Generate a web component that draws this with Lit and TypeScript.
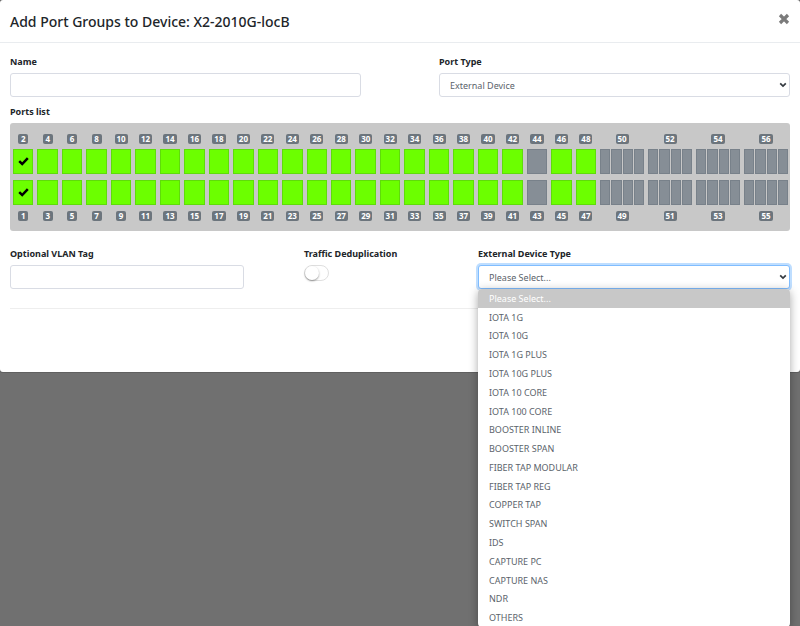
import { LitElement, html, css, svg } from "lit";
import { customElement, state } from "lit/decorators.js";
import { classMap } from "lit/directives/class-map.js";

const DEVICE_TYPES = [
  "Please Select...",
  "IOTA 1G",
  "IOTA 10G",
  "IOTA 1G PLUS",
  "IOTA 10G PLUS",
  "IOTA 10 CORE",
  "IOTA 100 CORE",
  "BOOSTER INLINE",
  "BOOSTER SPAN",
  "FIBER TAP MODULAR",
  "FIBER TAP REG",
  "COPPER TAP",
  "SWITCH SPAN",
  "IDS",
  "CAPTURE PC",
  "CAPTURE NAS",
  "NDR",
  "OTHERS",
];

const PORT_COUNT = 56;
const FIRST_QUAD_PORT = 49;
const DISABLED_PORTS = new Set([43, 44]);

const chevron = svg`<svg class="chevron" viewBox="0 0 8 6" aria-hidden="true">
  <path d="M1.2 1.3 4 4.1 6.8 1.3" fill="none" stroke="#343a40" stroke-width="1.7"/>
</svg>`;

@customElement("port-panel")
export class PortPanel extends LitElement {
  @state() private selected = new Set([1, 2]);

  static styles = css`
    :host {
      display: block;
      padding: 11px 0 10px 1px;
      background: #c8c8c8;
      border-radius: 3px;
    }
    .grid {
      display: grid;
      grid-template-columns: repeat(24, minmax(0, 51fr)) repeat(4, minmax(0, 100fr));
      grid-template-rows: 10px 26px 26px 10px;
      row-gap: 5px;
    }
    .cell {
      display: flex;
      gap: 1px;
      padding: 0 2px 1px;
    }
    .label {
      justify-self: center;
      box-sizing: border-box;
      height: 10px;
      padding: 0 2px;
      min-width: 10px;
      text-align: center;
      border-radius: 2px;
      background: #6c757d;
      color: #fff;
      font-size: 8px;
      line-height: 10px;
      font-weight: 700;
    }
    .port {
      flex: 1;
      min-width: 0;
      display: flex;
      align-items: center;
      justify-content: center;
      padding: 0;
      border: 1px solid #5fdc0a;
      border-radius: 0;
      background: #6cff00;
    }
    .port.off {
      border-color: #78818a;
      background: #868e96;
    }
    .check {
      width: 11px;
      height: 9px;
    }
  `;

  private toggle(port: number) {
    const next = new Set(this.selected);
    if (!next.delete(port)) next.add(port);
    this.selected = next;
  }

  private renderCell(port: number) {
    const quad = port >= FIRST_QUAD_PORT;
    const off = quad || DISABLED_PORTS.has(port);
    const lanes = quad ? [1, 2, 3, 4] : [1];
    return html`<div class="cell">
      ${lanes.map(
        (lane) => html`<button
          type="button"
          class=${classMap({ port: true, off })}
          ?disabled=${off}
          aria-label=${quad ? `Port ${port} lane ${lane}` : `Port ${port}`}
          @click=${() => this.toggle(port)}
        >${this.selected.has(port)
          ? html`<svg class="check" viewBox="0 0 11 9" aria-hidden="true">
              <path d="M1.2 4.2 4.2 7 9.8 1.2" fill="none" stroke="#000" stroke-width="2.5"/>
            </svg>`
          : null}</button>`
      )}
    </div>`;
  }

  render() {
    const columns = Array.from({ length: PORT_COUNT / 2 }, (_, i) => i * 2 + 1);
    return html`<div class="grid">
      ${columns.map((p) => html`<span class="label">${p + 1}</span>`)}
      ${columns.map((p) => this.renderCell(p + 1))}
      ${columns.map((p) => this.renderCell(p))}
      ${columns.map((p) => html`<span class="label">${p}</span>`)}
    </div>`;
  }
}

@customElement("app-root")
export class AppRoot extends LitElement {
  @state() private deviceType = DEVICE_TYPES[0];
  @state() private open = true;

  static styles = css`
    :host {
      display: block;
      height: 100vh;
      overflow: hidden;
      background: #707070;
      font-family: "Noto Sans", "Open Sans", sans-serif;
      font-size: 9px;
      color: #212529;
    }
    .modal {
      background: #fff;
      border-radius: 3px;
      box-shadow: 0 0 0 1px #606060;
      padding-bottom: 63px;
    }
    .header {
      display: flex;
      align-items: center;
      justify-content: space-between;
      height: 42px;
      padding: 0 10px;
      border-bottom: 1px solid #e9ecef;
    }
    .title {
      margin: 0;
      font-size: 14px;
      line-height: 22px;
      padding-top: 2px;
      font-weight: 500;
    }
    .close {
      display: flex;
      padding: 0;
      border: 0;
      background: none;
      margin-bottom: 4px;
    }
    .close-icon {
      width: 12px;
      height: 12px;
    }
    .body {
      padding: 0 10px;
    }
    .row {
      display: grid;
    }
    .row.halves {
      grid-template-columns: 45% 45%;
      justify-content: space-between;
      padding-top: 10px;
    }
    .row.thirds {
      grid-template-columns: 30% 1fr 40%;
      column-gap: 60px;
      padding: 14px 0 19px;
      border-bottom: 1px solid #eeeeee;
    }
    .label {
      display: block;
      margin-bottom: 2px;
      line-height: 18px;
      font-weight: 700;
      white-space: nowrap;
    }
    .ports-label {
      margin-top: 6px;
    }
    .control {
      box-sizing: border-box;
      display: block;
      width: 100%;
      height: 24px;
      padding: 0 10px;
      border: 1px solid #d9dce4;
      border-radius: 3px;
      background: #fff;
      color: #5b636b;
      font: inherit;
      outline: none;
      appearance: none;
    }
    .control.focused {
      border-color: #80bdff;
      box-shadow: 0 0 0 2px #bfdeff;
    }
    .select {
      position: relative;
    }
    .chevron {
      position: absolute;
      right: 3px;
      top: 9px;
      width: 8px;
      height: 6px;
      pointer-events: none;
    }
    .switch {
      appearance: none;
      box-sizing: border-box;
      display: flex;
      width: 25px;
      height: 16px;
      margin: 0;
      border: 1px solid #dfdfdf;
      border-radius: 8px;
      background: #fff;
    }
    .switch::before {
      content: "";
      width: 14px;
      height: 14px;
      border-radius: 50%;
      background: #fff;
      box-shadow: 0 1px 2px #00000066;
    }
    .switch:checked {
      justify-content: flex-end;
      background: #6cff00;
    }
    .menu {
      position: absolute;
      top: 100%;
      left: 0;
      right: 0;
      z-index: 1;
      display: grid;
      grid-auto-rows: 1fr;
      height: 338px;
      margin: 0;
      padding: 0;
      list-style: none;
      border-radius: 4px;
      background: #fff;
      color: #5b636b;
      box-shadow: 0 2px 10px #00000059;
    }
    .option {
      display: flex;
      align-items: center;
      padding: 0 11px;
    }
    .option.current {
      border-radius: 4px 4px 0 0;
      background: #c8c8c8;
      color: #fff;
    }
  `;

  private pick(type: string) {
    this.deviceType = type;
    this.open = false;
  }

  render() {
    return html`
      <section class="modal" role="dialog" aria-labelledby="title">
        <header class="header">
          <h1 class="title" id="title">Add Port Groups to Device: X2-2010G-locB</h1>
          <button class="close" type="button" aria-label="Close">
            <svg class="close-icon" viewBox="0 0 12 12" aria-hidden="true">
              <path d="M2 2 10 10M10 2 2 10" stroke="#7b7b7b" stroke-width="3.2"/>
            </svg>
          </button>
        </header>
        <div class="body">
          <div class="row halves">
            <div>
              <label class="label" for="name">Name</label>
              <input class="control" id="name" type="text" />
            </div>
            <div>
              <label class="label" for="port-type">Port Type</label>
              <div class="select">
                <select class="control" id="port-type">
                  <option>External Device</option>
                </select>
                ${chevron}
              </div>
            </div>
          </div>
          <div class="label ports-label">Ports list</div>
          <port-panel></port-panel>
          <div class="row thirds">
            <div>
              <label class="label" for="vlan">Optional VLAN Tag</label>
              <input class="control" id="vlan" type="text" />
            </div>
            <div>
              <label class="label" for="dedup">Traffic Deduplication</label>
              <input class="switch" id="dedup" type="checkbox" role="switch" />
            </div>
            <div>
              <label class="label" for="device-type">External Device Type</label>
              <div class="select">
                <select class="control focused" id="device-type" .value=${this.deviceType}>
                  ${DEVICE_TYPES.map((t) => html`<option ?selected=${t === this.deviceType}>${t}</option>`)}
                </select>
                ${chevron}
                ${this.open
                  ? html`<ul class="menu" role="listbox" aria-label="External Device Type">
                        ${DEVICE_TYPES.map(
                          (t) => html`<li
                            class=${classMap({ option: true, current: t === this.deviceType })}
                            role="option"
                            aria-selected=${t === this.deviceType ? "true" : "false"}
                            @click=${() => this.pick(t)}
                          >${t}</li>`
                        )}
                      </ul>`
                  : null}
              </div>
            </div>
          </div>
        </div>
      </section>
    `;
  }
}
